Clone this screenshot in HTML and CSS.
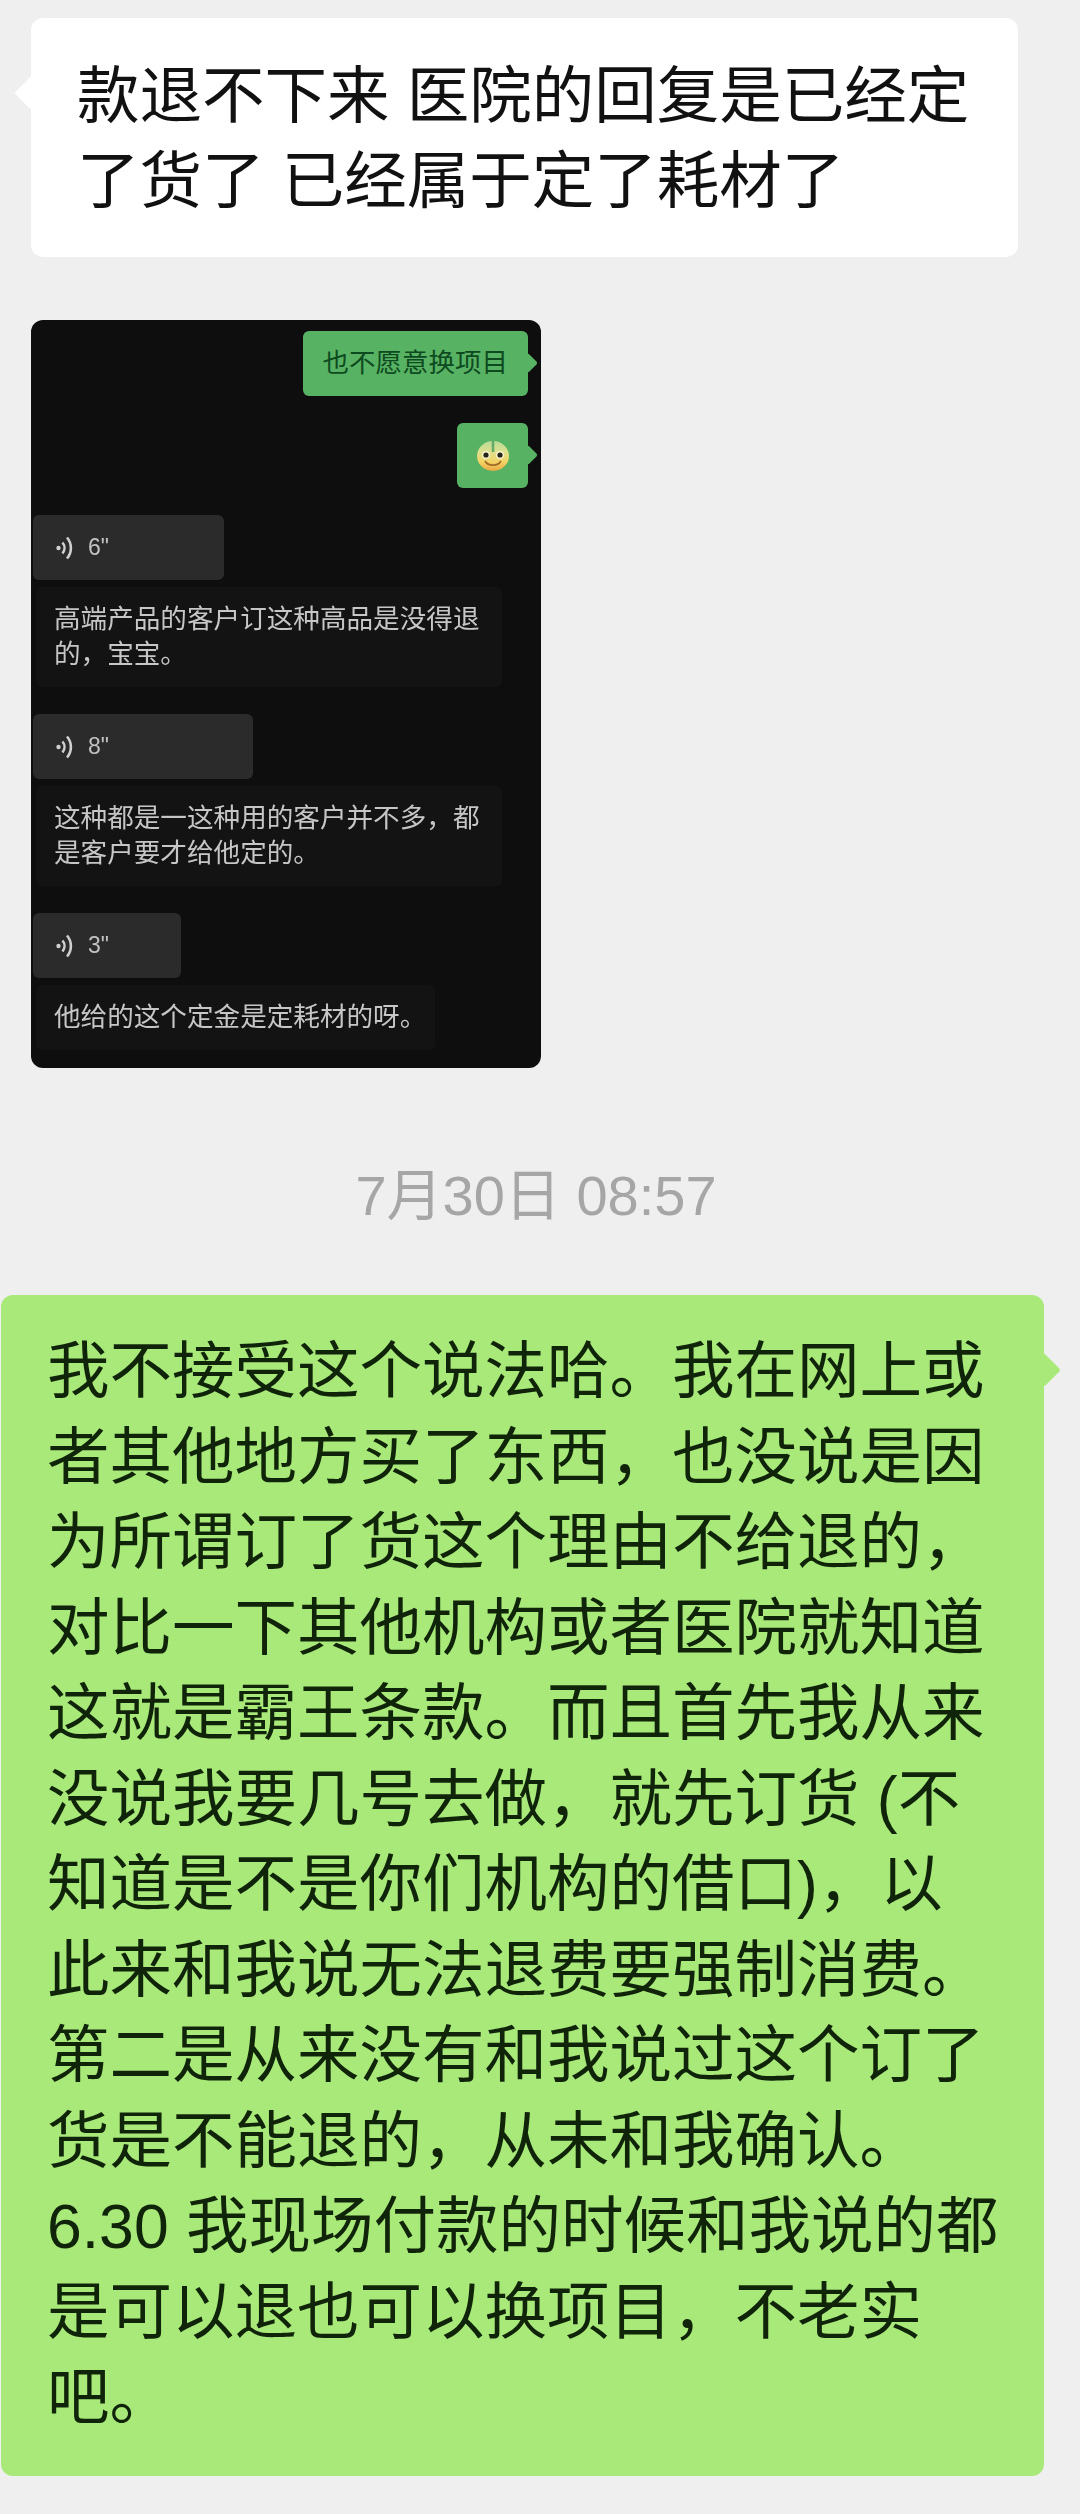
FILE: index.html
```html
<!DOCTYPE html>
<html lang="zh-CN">
  <head>
    <meta charset="UTF-8" />
    <title>聊天记录</title>
    <meta name="viewport" content="width=device-width, initial-scale=1.0" />
    <link rel="stylesheet" href="styles.css">
  </head>
  <body>
    <div class="bubble bubble-white">
      款退不下来 医院的回复是已经定<br />了货了 已经属于定了耗材了
    </div>

    <div class="shot">
      <div class="sent">也不愿意换项目</div>
      <div class="sent sent-emoji">
        <svg class="emoji" viewBox="0 0 32 30" xmlns="http://www.w3.org/2000/svg">
          <defs>
            <linearGradient id="faceFill" x1="0" y1="0" x2="0" y2="1">
              <stop offset="0" stop-color="#b9dc98" />
              <stop offset="0.38" stop-color="#dfe08c" />
              <stop offset="0.7" stop-color="#f4d264" />
              <stop offset="1" stop-color="#eaa944" />
            </linearGradient>
          </defs>
          <ellipse cx="16" cy="15" rx="16" ry="15" fill="url(#faceFill)" />
          <path d="M16 0v11" stroke="#63a968" stroke-width="2.5" fill="none" />
          <circle cx="9" cy="14" r="4.2" fill="#f6f0c8" />
          <circle cx="23" cy="14" r="4.2" fill="#f6f0c8" />
          <circle cx="9" cy="14" r="2.6" fill="#26241a" />
          <circle cx="23" cy="14" r="2.6" fill="#26241a" />
          <path d="M8 20c3 5.500 13 5.500 16 0" stroke="#a06c28" stroke-width="1.600" fill="none" />
        </svg>
      </div>

      <div class="turn">
        <div class="voice voice-6">
          <svg class="voice-icon" viewBox="0 0 17 24" xmlns="http://www.w3.org/2000/svg">
            <circle cx="2.500" cy="12" r="2.200" />
            <path d="M6.500 6.500c2.600 3.200 2.600 7.800 0 11" />
            <path d="M11 1.500c5.200 6 5.200 15 0 21" />
          </svg>
          <span>6"</span>
        </div>
        <div class="transcript">高端产品的客户订这种高品是没得退<br />的，宝宝。</div>
      </div>

      <div class="turn">
        <div class="voice voice-8">
          <svg class="voice-icon" viewBox="0 0 17 24" xmlns="http://www.w3.org/2000/svg">
            <circle cx="2.500" cy="12" r="2.200" />
            <path d="M6.500 6.500c2.600 3.200 2.600 7.800 0 11" />
            <path d="M11 1.500c5.200 6 5.200 15 0 21" />
          </svg>
          <span>8"</span>
        </div>
        <div class="transcript">这种都是一这种用的客户并不多，都<br />是客户要才给他定的。</div>
      </div>

      <div class="turn">
        <div class="voice voice-3">
          <svg class="voice-icon" viewBox="0 0 17 24" xmlns="http://www.w3.org/2000/svg">
            <circle cx="2.500" cy="12" r="2.200" />
            <path d="M6.500 6.500c2.600 3.200 2.600 7.800 0 11" />
            <path d="M11 1.500c5.200 6 5.200 15 0 21" />
          </svg>
          <span>3"</span>
        </div>
        <div class="transcript transcript-short">他给的这个定金是定耗材的呀。</div>
      </div>
    </div>

    <div class="date">7月30日 08:57</div>

    <div class="bubble bubble-green">
      我不接受这个说法哈。我在网上或<br />
      者其他地方买了东西，也没说是因<br />
      为所谓订了货这个理由不给退的，<br />
      对比一下其他机构或者医院就知道<br />
      这就是霸王条款。而且首先我从来<br />
      没说我要几号去做，就先订货 (不<br />
      知道是不是你们机构的借口)，以<br />
      此来和我说无法退费要强制消费。<br />
      第二是从来没有和我说过这个订了<br />
      货是不能退的，从未和我确认。<br />
      6.30 我现场付款的时候和我说的都<br />
      是可以退也可以换项目，不老实<br />
      吧。
    </div>
  </body>
</html>
```

FILE: styles.css
```css
body {
  font-family: "Liberation Sans", "Noto Sans CJK SC", sans-serif;
  background-color: #efefef;
  margin: 0;
  padding: 18px 0 0;
  display: flex;
  flex-direction: column;
  align-items: flex-start;
  height: 2496px;
  overflow: hidden;
}

.bubble {
  position: relative;
  font-size: 62.5px;
  white-space: nowrap;
  border-radius: 12px;
  box-sizing: border-box;
}

.bubble::before {
  content: "";
  position: absolute;
  width: 24px;
  height: 24px;
  transform: rotate(45deg);
  background: inherit;
  border-radius: 3px;
}

.bubble-white {
  background: #fff;
  color: #111;
  width: 987px;
  height: 239px;
  margin-left: 31px;
  padding: 36px 0 0 46px;
  line-height: 85px;
}

.bubble-white::before {
  left: -12px;
  top: 63px;
}

.shot {
  width: 510px;
  height: 748px;
  margin: 63px 0 0 31px;
  padding: 11px 0 0;
  box-sizing: border-box;
  background: #0e0e0f;
  border-radius: 12px;
  display: flex;
  flex-direction: column;
  gap: 27px;
  filter: blur(0.5px);
}

.sent {
  position: relative;
  align-self: flex-end;
  margin-right: 13px;
  height: 65px;
  padding: 0 20px;
  background: #57b263;
  color: #0e4a20;
  font-size: 26.5px;
  line-height: 65px;
  border-radius: 6px;
}

.sent::after {
  content: "";
  position: absolute;
  right: -7px;
  top: 25px;
  width: 14px;
  height: 14px;
  transform: rotate(45deg);
  background: inherit;
  border-radius: 2px;
}

.sent-emoji {
  width: 71px;
  padding: 0;
  display: flex;
  align-items: center;
  justify-content: center;
}

.emoji {
  width: 32px;
  height: 30px;
}

.turn {
  display: flex;
  flex-direction: column;
  align-items: flex-start;
  gap: 7px;
}

.voice {
  height: 65px;
  margin-left: 2px;
  padding-left: 23px;
  box-sizing: border-box;
  display: flex;
  align-items: center;
  gap: 15px;
  background: #2b2b2b;
  color: #c2c2c2;
  font-size: 23px;
  border-radius: 6px;
}

.voice-6 {
  width: 191px;
}

.voice-8 {
  width: 220px;
}

.voice-3 {
  width: 148px;
}

.voice-icon {
  width: 17px;
  height: 24px;
  fill: none;
  stroke: #cfcfcf;
  stroke-width: 2.6;
}

.voice-icon circle {
  fill: #cfcfcf;
  stroke: none;
}

.transcript {
  width: 466px;
  margin-left: 5px;
  padding: 15px 0 15px 18px;
  box-sizing: border-box;
  background: #131314;
  color: #c6c6c6;
  font-size: 26.6px;
  line-height: 35px;
  white-space: nowrap;
  border-radius: 6px;
}

.transcript-short {
  width: 399px;
}

.date {
  margin: 98px 8px 0 0;
  align-self: center;
  height: 60px;
  color: #a6a6a6;
  font-size: 56px;
  line-height: 60px;
}

.bubble-green {
  background: #a9e97a;
  color: #10240a;
  width: 1043px;
  height: 1181px;
  margin: 69px 0 0 1px;
  padding: 34px 0 0 46px;
  line-height: 85.5px;
}

.bubble-green::before {
  right: -12px;
  top: 63px;
}
```
